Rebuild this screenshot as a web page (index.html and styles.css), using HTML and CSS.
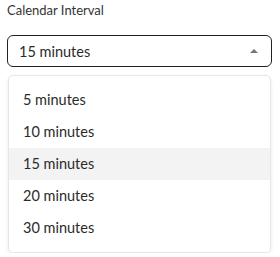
FILE: index.html
```html
<!DOCTYPE html>
<html lang="en">
<head>
    <meta charset="UTF-8">
    <title>Calendar Interval</title>
    <link rel="stylesheet" href="styles.css">
</head>
<body>
    <label class="field-label">Calendar Interval</label>
    <div class="select">
        <span>15 minutes</span>
        <svg class="arrow" width="8" height="4" viewBox="0 0 8 4"><path d="M0 4 L4 0 L8 4 Z" fill="#757575"/></svg>
    </div>

    <!-- open menu -->
    <ul class="menu">
        <li>5 minutes</li>
        <li>10 minutes</li>
        <li class="selected">15 minutes</li>
        <li>20 minutes</li>
        <li>30 minutes</li>
    </ul>
</body>
</html>
```

FILE: styles.css
```css
body {
    margin: 0;
    padding: 0 8px 0 7px;
    width: 265px;
    font-family: Lato, "Noto Sans", sans-serif;
    background: #fff;
    color: #2b2b2b;
}
.field-label {
    display: block;
    font-size: 13px;
    line-height: 16px;
    padding-top: 2px;
    color: #333;
}
.select {
    margin-top: 17px;
    height: 30px;
    border: 1px solid #222;
    border-radius: 6px;
    display: flex;
    align-items: center;
    justify-content: space-between;
    padding: 0 13px 0 11px;
    font-size: 14.5px;
}
.arrow {
    margin-top: -1px;
}
.menu {
    list-style: none;
    margin: 8px 1px 0 1px;
    padding: 8px 0;
    border: 1px solid #e6e6e6;
    border-radius: 5px;
    box-shadow: 0 2px 4px rgba(0,0,0,0.08);
}
.menu li {
    height: 32px;
    line-height: 32px;
    padding: 0 14px;
    font-size: 14.5px;
}
.menu li.selected {
    background-color: #f3f3f3;
}
```
